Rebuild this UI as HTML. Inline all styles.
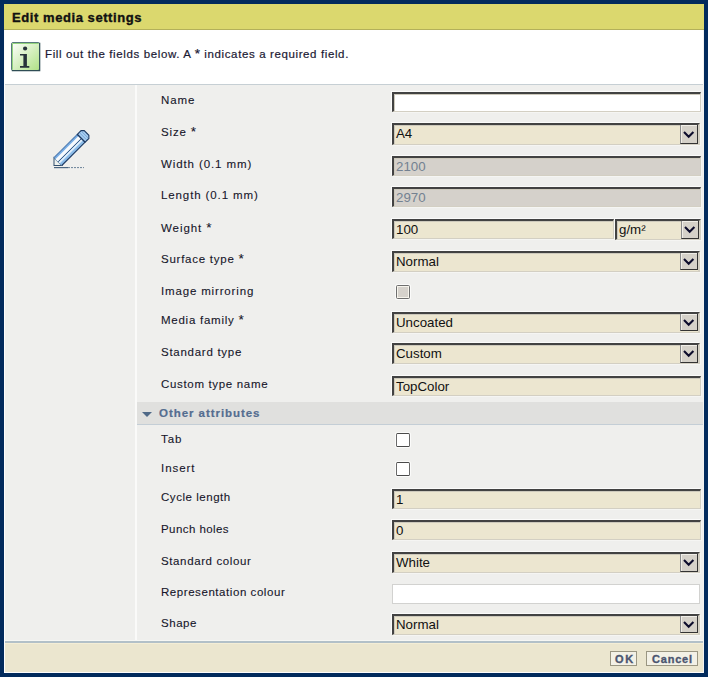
<!DOCTYPE html>
<html><head><meta charset="utf-8">
<style>
*{box-sizing:border-box;margin:0;padding:0}
html,body{width:708px;height:677px;overflow:hidden;background:#022b5d;font-family:"Liberation Sans",sans-serif}
.abs{position:absolute}
#title{left:4px;top:4px;width:700px;height:26px;background:#dbd86e;border-bottom:1px solid #b3b05a}
#title span{position:absolute;left:8px;top:6px;font-weight:bold;font-size:13px;line-height:15px;color:#111;letter-spacing:0.57px;white-space:nowrap;-webkit-text-stroke:0.35px #111}
#info{left:4px;top:30px;width:700px;height:55px;background:#fff;border-bottom:1px solid #c6cfd4}
#info .txt{position:absolute;left:41px;top:17px;font-size:11.5px;line-height:14px;color:#1c1a34;letter-spacing:0.62px;white-space:nowrap;-webkit-text-stroke:0.2px #1c1a34}
#body{left:4px;top:85px;width:700px;height:556px;background:#efefed}
#divider{left:135px;top:85px;width:2px;height:317px;background:#fafaf9}
#divider2{left:135px;top:402px;width:2px;height:239px;background:#fafaf9}
.lbl{position:absolute;left:161px;font-size:11.5px;line-height:14px;color:#16162a;white-space:nowrap;-webkit-text-stroke:0.1px #16162a}
.inp{position:absolute;left:392px;width:309px;height:21px;background:#ece6d0;border-top:2px solid #424242;border-left:2px solid #424242;border-right:1px solid #d3cfc3;border-bottom:1px solid #d3cfc3;box-shadow:inset 1px 1px 0 #cdc9bc, -1px -1px 0 #fbfbfa, 1px 1px 0 #f5f5f3}
.inp span{position:absolute;left:2px;top:1px;font-size:13.3px;line-height:16px;color:#111;letter-spacing:0px;white-space:nowrap}
.sel{width:308px;border-right-width:2px}
.btn{position:absolute;right:0;top:0;width:18px;height:19px;background:#d5d1c9;border:1px solid #333;border-top:none;border-left-color:#8a8a8a;box-shadow:inset 1px 1px 0 #f0eee8}
.ast{font-size:13.5px;line-height:0}
.white{background:#fff}
.dis{background:#d5d1cb}
.dis span{color:#738191}
.rep{background:#fff;border:1px solid #d2d2d0;box-shadow:none}
.cb{position:absolute;left:396px;width:14px;height:14px;background:#fff;border:1.5px solid #4a4a4a;border-left-color:#6a6a6a;border-right-color:#6a6a6a;border-radius:1.5px;box-shadow:0 0 0 1px #fbfbfa}
.dcb{background:#d6d2cc;border-color:#6e6e6e;box-shadow:inset 1px 1px 0 #f6f4ec,inset -1px -1px 0 #f6f4ec,0 0 0 1px #fbfbfa}
#sect{left:137px;top:402px;width:567px;height:23px;background:#e0e0de;border-bottom:1px solid #c4ced6}
#sect .tri{position:absolute;left:5px;top:10px;width:0;height:0;border-left:5px solid transparent;border-right:5px solid transparent;border-top:5px solid #4f6987}
#sect span{position:absolute;left:22px;top:4px;font-weight:bold;font-size:11.5px;line-height:14px;color:#546d90;letter-spacing:0.95px;white-space:nowrap;-webkit-text-stroke:0.2px #546d90}
#fline{left:4px;top:640px;width:700px;height:3px;background:#b2c0c8;border-top:1px solid #f6f7f4}
#footer{left:4px;top:643px;width:700px;height:30px;background:#ebe6cf;border-top:1px solid #f4eed6}
.fbtn{position:absolute;top:651px;height:15px;background:#f3f1e6;border:1px solid #9a9682;font-weight:bold;font-size:11px;line-height:13px;color:#4c5670;white-space:nowrap;-webkit-text-stroke:0.35px #4c5670}
.fbtn span{position:absolute;top:1px}
</style></head><body>
<div id="title" class="abs"><span>Edit media settings</span></div>
<div id="info" class="abs">
  <svg class="abs" style="left:7px;top:12px" width="30" height="30" viewBox="0 0 30 30">
    <defs><linearGradient id="ig" x1="0" y1="0" x2="1" y2="1"><stop offset="0" stop-color="#ffffff"/><stop offset="1" stop-color="#aee184"/></linearGradient></defs>
    <rect x="0.5" y="0.5" width="28" height="28" rx="1.5" fill="url(#ig)" stroke="#587a7c" stroke-width="1"/>
    <path d="M1.5 27.5 V1.5 H27.5" fill="none" stroke="#94d47e" stroke-width="1"/>
    <path d="M0.8 28.7 H28.7 V0.8" fill="none" stroke="#2f4d55" stroke-width="1.2"/>
    <circle cx="14.1" cy="6.5" r="2.1" fill="#27323a"/>
    <path d="M9 11.9 H15.9 V24.1 H18.3 V25.8 H9 V24.1 H12.4 V13.4 H9 Z" fill="#27323a"/>
  </svg>
  <div class="txt">Fill out the fields below. A <span class="ast">*</span> indicates a required field.</div>
</div>
<div id="body" class="abs"></div>
<div id="divider" class="abs"></div>
<div id="divider2" class="abs"></div>
<svg class="abs" style="left:0;top:0" width="100" height="180" viewBox="0 0 100 180">
  <g transform="translate(54,165.5) rotate(-45)">
    <path d="M5.5 -5.5 L0 0 L5.5 5.5 Z" fill="#eef1ee" stroke="#33506e" stroke-width="1"/>
    <rect x="5.5" y="-5.5" width="33" height="11" fill="#9cc6ee"/>
    <rect x="5.5" y="-5" width="33" height="1.6" fill="#78aee6"/>
    <rect x="5.5" y="-3.4" width="33" height="3.2" fill="#f7fafd"/>
    <rect x="5.5" y="0.9" width="33" height="1.8" fill="#e4f0fb"/>
    <rect x="5.5" y="2.7" width="33" height="2.3" fill="#8dbde9"/>
    <path d="M5.5 0.3 H38.5" stroke="#2f5079" stroke-width="0.9"/>
    <path d="M5.5 -5.5 H38.5" stroke="#4a78b0" stroke-width="1"/>
    <path d="M5.5 5.5 H38.5" stroke="#1d3a64" stroke-width="1.1"/>
    <path d="M38.5 -5.5 H43.8 L46 -3.3 V3.3 L43.8 5.5 H38.5 Z" fill="#a6cdf2" stroke="#1c3962" stroke-width="1.1"/>
    <path d="M38.5 -5.5 V5.5" stroke="#1c3962" stroke-width="1"/>
    <path d="M41.2 -5 V5 M43.6 -5 V5" stroke="#6b97c6" stroke-width="0.7"/>
  </g>
  <path d="M54 167.6 H68" stroke="#4a6580" stroke-width="1.2"/>
  <path d="M68 167.6 H84" stroke="#6a8298" stroke-width="1" stroke-dasharray="2 1"/>
</svg>
<div class="lbl" style="top:93px;letter-spacing:0.9px">Name</div>
<div class="inp white" style="top:92px;height:20px;width:309px"><span></span></div>
<div class="lbl" style="top:125px;letter-spacing:0.84px">Size <span class="ast">*</span></div>
<div class="inp sel" style="top:123px;left:392px;width:308px;height:22px"><span>A4</span><div class="btn" style="height:19px"><svg width="12" height="8" viewBox="0 0 12 8" style="position:absolute;left:1.5px;top:6px"><path d="M1 1 L5.7 5.7 L10.4 1" fill="none" stroke="#0c0c2c" stroke-width="2.1"/></svg></div></div>
<div class="lbl" style="top:157px;letter-spacing:0.9px">Width (0.1 mm)</div>
<div class="inp dis" style="top:156px;height:20px;width:309px"><span>2100</span></div>
<div class="lbl" style="top:188px;letter-spacing:0.89px">Length (0.1 mm)</div>
<div class="inp dis" style="top:187px;height:20px;width:309px"><span>2970</span></div>
<div class="lbl" style="top:221px;letter-spacing:0.93px">Weight <span class="ast">*</span></div>
<div class="inp " style="top:219px;height:20px;width:222px"><span>100</span></div>
<div class="inp sel" style="top:219px;left:615px;width:86px;height:21px"><span>g/m²</span><div class="btn" style="height:18px"><svg width="12" height="8" viewBox="0 0 12 8" style="position:absolute;left:1.5px;top:5px"><path d="M1 1 L5.7 5.7 L10.4 1" fill="none" stroke="#0c0c2c" stroke-width="2.1"/></svg></div></div>
<div class="lbl" style="top:252px;letter-spacing:0.75px">Surface type <span class="ast">*</span></div>
<div class="inp sel" style="top:251px;left:392px;width:308px;height:21px"><span>Normal</span><div class="btn" style="height:17px"><svg width="12" height="8" viewBox="0 0 12 8" style="position:absolute;left:1.5px;top:5px"><path d="M1 1 L5.7 5.7 L10.4 1" fill="none" stroke="#0c0c2c" stroke-width="2.1"/></svg></div></div>
<div class="lbl" style="top:284px;letter-spacing:0.84px">Image mirroring</div>
<div class="cb dcb" style="top:285px"></div>
<div class="lbl" style="top:312.5px;letter-spacing:0.75px">Media family <span class="ast">*</span></div>
<div class="inp sel" style="top:312px;left:392px;width:308px;height:21px"><span>Uncoated</span><div class="btn" style="height:17px"><svg width="12" height="8" viewBox="0 0 12 8" style="position:absolute;left:1.5px;top:5px"><path d="M1 1 L5.7 5.7 L10.4 1" fill="none" stroke="#0c0c2c" stroke-width="2.1"/></svg></div></div>
<div class="lbl" style="top:345px;letter-spacing:0.73px">Standard type</div>
<div class="inp sel" style="top:343px;left:392px;width:308px;height:21px"><span>Custom</span><div class="btn" style="height:18px"><svg width="12" height="8" viewBox="0 0 12 8" style="position:absolute;left:1.5px;top:5px"><path d="M1 1 L5.7 5.7 L10.4 1" fill="none" stroke="#0c0c2c" stroke-width="2.1"/></svg></div></div>
<div class="lbl" style="top:377px;letter-spacing:0.67px">Custom type name</div>
<div class="inp " style="top:376px;height:20px;width:309px"><span>TopColor</span></div>
<div id="sect" class="abs"><div class="tri"></div><span>Other attributes</span></div>
<div class="lbl" style="top:431.5px;letter-spacing:0.9px">Tab</div>
<div class="cb" style="top:433px"></div>
<div class="lbl" style="top:461px;letter-spacing:0.94px">Insert</div>
<div class="cb" style="top:462px"></div>
<div class="lbl" style="top:490px;letter-spacing:0.54px">Cycle length</div>
<div class="inp " style="top:489px;height:20px;width:309px"><span>1</span></div>
<div class="lbl" style="top:522px;letter-spacing:0.43px">Punch holes</div>
<div class="inp " style="top:520px;height:20px;width:309px"><span>0</span></div>
<div class="lbl" style="top:554px;letter-spacing:0.62px">Standard colour</div>
<div class="inp sel" style="top:552px;left:392px;width:308px;height:21px"><span>White</span><div class="btn" style="height:18px"><svg width="12" height="8" viewBox="0 0 12 8" style="position:absolute;left:1.5px;top:5px"><path d="M1 1 L5.7 5.7 L10.4 1" fill="none" stroke="#0c0c2c" stroke-width="2.1"/></svg></div></div>
<div class="lbl" style="top:585px;letter-spacing:0.56px">Representation colour</div>
<div class="inp rep" style="top:584px;height:20px;width:308px"></div>
<div class="lbl" style="top:615.5px;letter-spacing:0.55px">Shape</div>
<div class="inp sel" style="top:614px;left:392px;width:308px;height:21px"><span>Normal</span><div class="btn" style="height:17px"><svg width="12" height="8" viewBox="0 0 12 8" style="position:absolute;left:1.5px;top:5px"><path d="M1 1 L5.7 5.7 L10.4 1" fill="none" stroke="#0c0c2c" stroke-width="2.1"/></svg></div></div>
<div id="fline" class="abs"></div>
<div id="footer" class="abs"></div>
<div class="fbtn" style="left:610px;width:27px"><span style="left:4px;letter-spacing:1.6px">OK</span></div>
<div class="fbtn" style="left:646px;width:52px"><span style="left:5px;letter-spacing:0.8px">Cancel</span></div>
<div class="abs" style="left:4px;top:30px;width:1px;height:643px;background:#fdfdfd"></div>
<div class="abs" style="left:4px;top:672px;width:700px;height:1px;background:#fdfdfd"></div>
<div class="abs" style="left:703px;top:30px;width:1px;height:643px;background:#f2f2f0"></div>
</body></html>
